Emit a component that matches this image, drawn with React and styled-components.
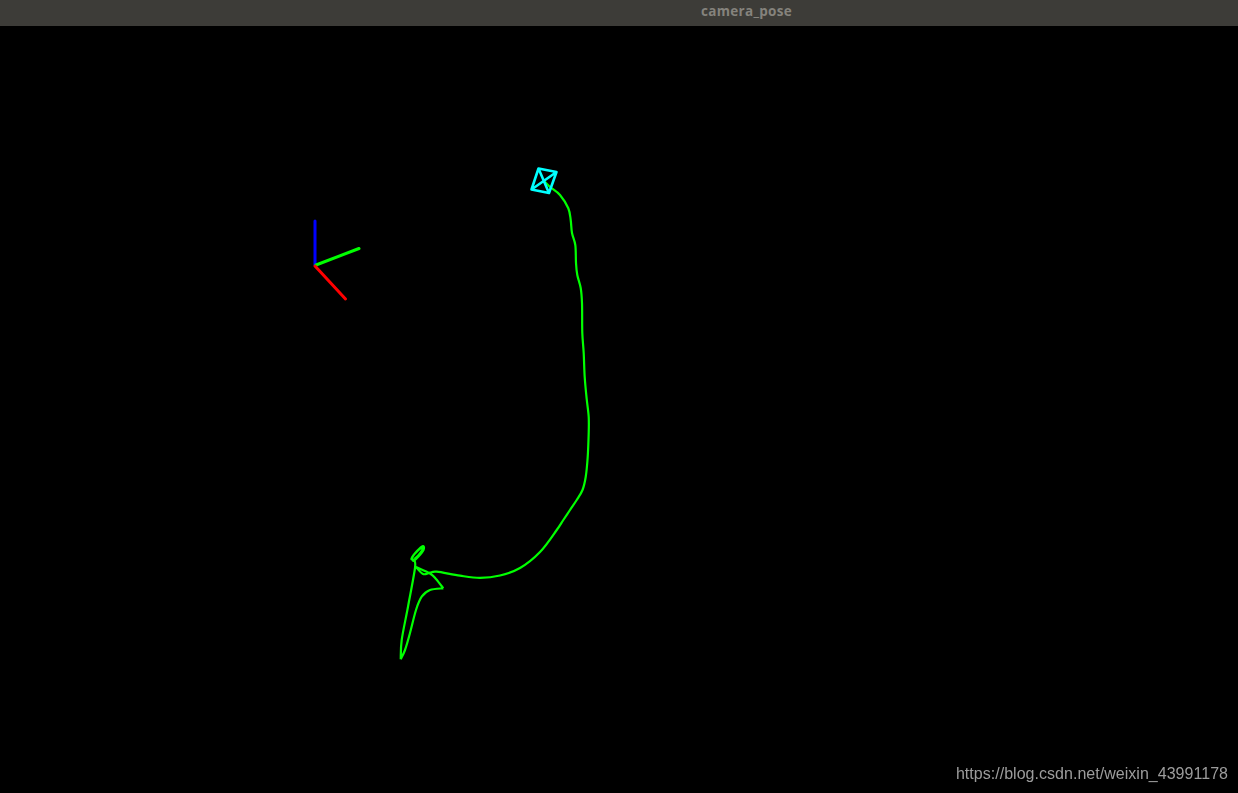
import React from "react";
import styled, { createGlobalStyle } from "styled-components";

const GlobalStyle = createGlobalStyle`
  html, body {
    margin: 0;
    padding: 0;
    height: 100%;
    background: #000;
    overflow: hidden;
  }
  #root {
    height: 100%;
  }
`;

const Window = styled.div`
  height: 793px;
  display: flex;
  flex-direction: column;
  background: #000;
`;

const TitleBar = styled.div`
  height: 26px;
  flex: none;
  display: flex;
  align-items: center;
  justify-content: center;
  padding: 0 0 4px 255px;
  box-sizing: border-box;
  background: #3d3c38;
`;

const Title = styled.span`
  font-family: "Open Sans", "DejaVu Sans", sans-serif;
  font-size: 13.5px;
  font-weight: 700;
  letter-spacing: 0.3px;
  color: #85837d;
`;

const Viewport = styled.div`
  flex: 1;
  position: relative;
`;

const Scene = styled.svg`
  display: block;
  width: 100%;
  height: 100%;
`;

const Watermark = styled.span`
  position: absolute;
  right: 10px;
  bottom: 9px;
  font-family: "Liberation Sans", Arial, sans-serif;
  font-size: 16px;
  letter-spacing: 0.03px;
  line-height: 20px;
  color: #9c9c9c;
  filter: blur(0.35px);
`;

// world axes, page coordinates
const axes = [
  { color: "#0000ff", d: "M315 221L315 265" },
  { color: "#00ff00", d: "M316 265L359 248.5" },
  { color: "#ff0000", d: "M315 266L345.5 299" },
];

// camera frustum seen from behind
const frustum = "M538.5 168.5L556.5 172L549 193L531.5 189.5ZM538.5 168.5L549 193M556.5 172L531.5 189.5";

// pieces of the path, split where it turns sharply
const trajectory = [
  [
    [544, 181], [550, 187], [560, 195], [568.3, 208.3], [570.7, 220], [572, 233],
    [575.3, 245], [576, 263], [577.3, 275], [580.7, 288], [582, 303], [582.3, 333], [583.7, 353],
    [584.7, 377], [586.7, 399], [588.7, 417], [588.7, 433], [587.7, 457], [585.7, 477], [582.5, 490],
    [576.7, 500], [570, 510], [563, 520.5], [556.7, 530], [540, 552], [520, 568], [500, 575.5], [480, 577.8],
    [460, 575.7], [436.7, 571.7], [430, 572.7], [423, 574], [416, 567],
  ],
  [[416, 567], [430, 573.5], [436, 579], [443.3, 588.3]],
  [
    [443.3, 588.3], [430, 590], [421.7, 596.7], [416, 610],
    [410, 633], [405, 650], [400.7, 659.3],
  ],
  [[400.7, 659.3], [401.7, 640], [408, 606.7], [415, 568], [414, 560]],
  [
    [414, 560], [411.5, 558.5], [417, 551], [423, 546], [423.5, 550], [418, 557], [413.5, 561],
    [412.5, 557], [418, 550.5], [423, 547.5], [419.5, 554], [414.5, 559],
  ],
];

// catmull-rom through the points, drawn as cubic beziers
const smooth = (pts) => {
  let d = `M${pts[0][0]} ${pts[0][1]}`;
  for (let i = 0; i < pts.length - 1; i++) {
    const p0 = pts[i - 1] || pts[i];
    const p1 = pts[i];
    const p2 = pts[i + 1];
    const p3 = pts[i + 2] || p2;
    const c1x = p1[0] + (p2[0] - p0[0]) / 6;
    const c1y = p1[1] + (p2[1] - p0[1]) / 6;
    const c2x = p2[0] - (p3[0] - p1[0]) / 6;
    const c2y = p2[1] - (p3[1] - p1[1]) / 6;
    d += `C${c1x.toFixed(1)} ${c1y.toFixed(1)} ${c2x.toFixed(1)} ${c2y.toFixed(1)} ${p2[0]} ${p2[1]}`;
  }
  return d;
};

const tracePath = trajectory.map(smooth).join("");

export default function App() {
  return (
    <>
      <GlobalStyle />
      <Window>
        <TitleBar>
          <Title>camera_pose</Title>
        </TitleBar>
        <Viewport>
          <Scene viewBox="0 26 1238 767">
            {axes.map((a) => (
              <path key={a.color} d={a.d} stroke={a.color} strokeWidth="3" fill="none" strokeLinecap="round" />
            ))}
            <path d={tracePath} stroke="#00ff00" strokeWidth="2.2" fill="none" strokeLinejoin="round" />
            <path d={frustum} stroke="#00ffff" strokeWidth="2.6" fill="none" strokeLinejoin="round" />
          </Scene>
          <Watermark>https://blog.csdn.net/weixin_43991178</Watermark>
        </Viewport>
      </Window>
    </>
  );
}
